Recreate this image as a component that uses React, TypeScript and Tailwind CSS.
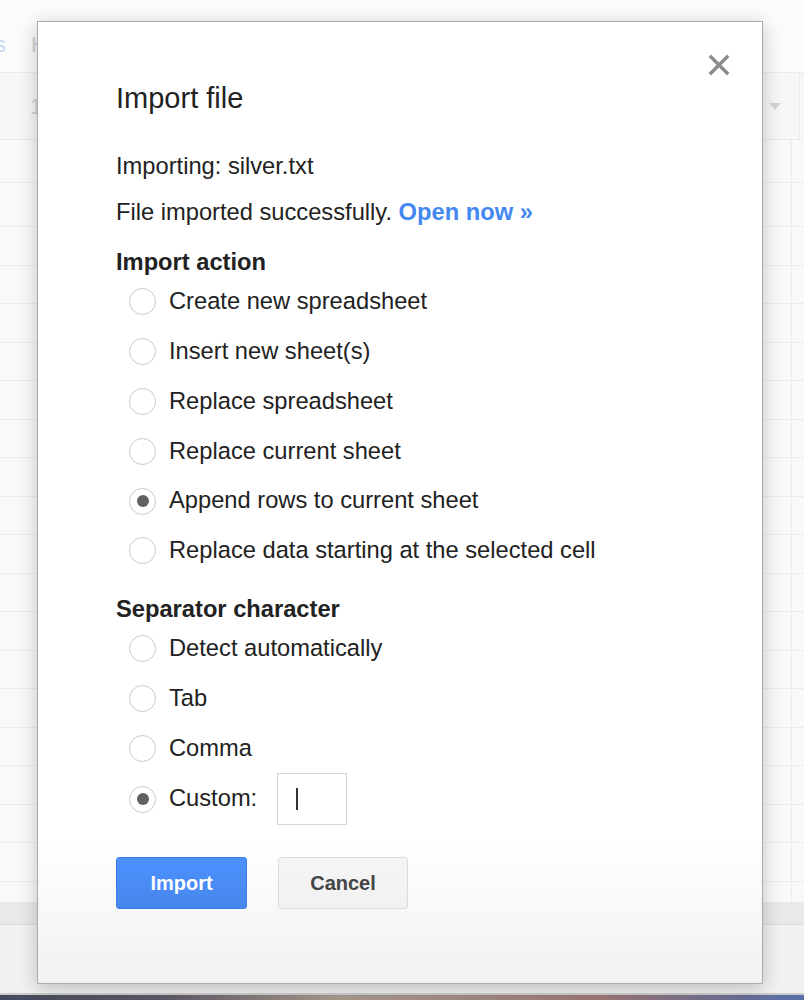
import React from "react";

const Radio = ({ checked }: { checked?: boolean }) => (
  <span className="w-[27px] h-[27px] rounded-full border-[1.5px] border-[#c9c9c9] bg-white flex items-center justify-center shrink-0">
    {checked && <span className="w-[12px] h-[12px] rounded-full bg-[#616161]" />}
  </span>
);

const RadioRow = ({
  label,
  checked,
  children,
  tall,
}: {
  label: string;
  checked?: boolean;
  children?: React.ReactNode;
  tall?: boolean;
}) => (
  <div className={(tall ? "h-[52px]" : "h-[49.8px]") + " flex items-center pl-[13px]"}>
    <Radio checked={checked} />
    <span className="ml-[13px] whitespace-nowrap">{label}</span>
    {children}
  </div>
);

const rows = Array.from({ length: 17 }, (_, i) => i);

export default function App() {
  return (
    <div className="relative w-[804px] h-[1000px] overflow-hidden bg-[#f9f9f9] font-['Liberation_Sans',Arial,sans-serif]">
      {/* background spreadsheet */}
      <div className="flex flex-col w-full h-full">
        <div className="h-[73px] bg-[#fbfbfb] border-b border-[#ececec] flex items-start pt-[33px] text-[22px] leading-[24px]">
          <span className="ml-[-5px] text-[#c7d8f4]">s</span>
          <span className="ml-[25px] text-[#d4d4d4]">He</span>
        </div>
        <div className="h-[67px] bg-[#f7f7f7] border-b border-[#ebebeb] flex items-center">
          <span className="ml-[30px] text-[22px] text-[#d2d2d2]">1</span>
          <span className="ml-auto mr-[18px] w-0 h-0 border-l-[6px] border-r-[6px] border-t-[7px] border-l-transparent border-r-transparent border-t-[#d6d6d6]" />
          <span className="w-px h-full bg-[#ebebeb] mr-[4px]" />
        </div>
        <div className="h-[43px] border-b border-[#ececec] flex">
          <div className="w-[792px] h-full border-r border-[#ececec]" />
        </div>
        <div className="h-[44px] border-b border-[#ececec] flex">
          <div className="w-[792px] h-full border-r border-[#ececec]" />
        </div>
        {rows.map((r) => (
          <div key={r} className="h-[38.5px] border-b border-[#ececec] flex">
            <div className="w-[792px] h-full border-r border-[#ececec]" />
          </div>
        ))}
        <div className="h-[20px] flex">
          <div className="w-[792px] h-full border-r border-[#ececec]" />
        </div>
        <div className="h-[23px] bg-[#e9e9e9] border-b border-[#dedede]" />
        <div className="flex-1 bg-[#f1f1f1]" />
        <div className="h-[2px] bg-[#cdcdcd]" />
        <div className="h-[5px] bg-[linear-gradient(to_right,#454a5d_0%,#5d5867_20%,#a99a8c_42%,#a28d85_55%,#9c7676_75%,#6f6f92_90%,#5670aa_100%)]" />
      </div>

      {/* dialog */}
      <div className="absolute left-[37px] top-[21px] w-[726px] h-[963px] border border-[#acacac] bg-linear-to-b from-white from-85% to-[#f1f1f1] shadow-[0_4px_18px_rgba(0,0,0,0.22)] pl-[78px] pt-[58px] text-[#222] text-[23.7px]">
        <button className="absolute right-[31px] top-[31px] w-[24px] h-[24px] flex items-center justify-center">
          <svg width="22" height="22" viewBox="0 0 22 22">
            <path d="M3 3 L19 19 M19 3 L3 19" stroke="#8c8c8c" strokeWidth="3.4" strokeLinecap="square" />
          </svg>
        </button>

        <div className="text-[29px] leading-[36px] text-[#222]">Import file</div>

        <div className="mt-[27px] leading-[46px]">Importing: silver.txt</div>
        <div className="leading-[46px]">
          File imported successfully.{" "}
          <span className="font-bold text-[#4387f0]">Open now »</span>
        </div>

        <div className="mt-[14px] h-[28px] flex items-center font-bold">Import action</div>
        <RadioRow label="Create new spreadsheet" />
        <RadioRow label="Insert new sheet(s)" />
        <RadioRow label="Replace spreadsheet" />
        <RadioRow label="Replace current sheet" />
        <RadioRow label="Append rows to current sheet" checked />
        <RadioRow label="Replace data starting at the selected cell" />

        <div className="mt-[19px] h-[29px] flex items-center font-bold">Separator character</div>
        <RadioRow label="Detect automatically" />
        <RadioRow label="Tab" />
        <RadioRow label="Comma" />
        <RadioRow label="Custom:" checked tall>
          <div className="ml-[20px] w-[70px] h-[52px] border border-[#d6d6d6] bg-white flex items-center pl-[18px]">
            <span className="w-[2px] h-[22px] bg-[#333]" />
          </div>
        </RadioRow>

        <div className="mt-[32px] flex gap-[31px]">
          <button className="w-[131px] h-[52px] rounded-[3px] border border-[#3b7eea] bg-linear-to-b from-[#4d90fe] to-[#4787ed] text-white font-bold text-[20px]">
            Import
          </button>
          <button className="w-[130px] h-[52px] rounded-[3px] border border-[#dcdcdc] bg-linear-to-b from-[#f5f5f5] to-[#f1f1f1] text-[#444] font-bold text-[20px]">
            Cancel
          </button>
        </div>
      </div>
    </div>
  );
}
